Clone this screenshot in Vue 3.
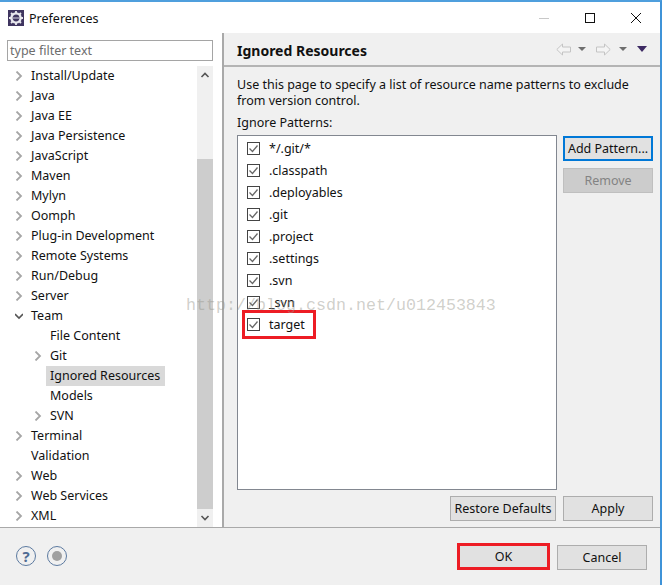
<template>
  <div class="window">
    <div class="titlebar">
      <svg class="app-icon" width="16" height="16" viewBox="0 0 16 16">
        <rect width="16" height="16" fill="#3f3560" />
        <circle cx="8" cy="8" r="4.6" fill="none" stroke="#e8e8ee" stroke-width="2.4" />
        <path d="M8 1v3M8 12v3M1 8h3M12 8h3M3 3l2 2M11 11l2 2M13 3l-2 2M5 11l-2 2" stroke="#e8e8ee" stroke-width="1.8" />
        <rect x="5" y="7" width="6" height="2" fill="#8a84a0" />
      </svg>
      <span class="title">Preferences</span>
      <div class="win-buttons">
        <svg width="10" height="10" viewBox="0 0 10 10"><path d="M0 5.5h10" stroke="#c8c8c8" /></svg>
        <svg width="10" height="10" viewBox="0 0 10 10"><rect x=".5" y=".5" width="9" height="9" fill="none" stroke="#111" /></svg>
        <svg width="10" height="10" viewBox="0 0 10 10"><path d="M0 0l10 10M10 0L0 10" stroke="#111" /></svg>
      </div>
    </div>

    <div class="main">
      <div class="left">
        <div class="filter">type filter text</div>
        <div class="tree-wrap">
          <div class="tree">
            <div
              v-for="item in tree"
              :key="item.label"
              class="tree-row"
              :class="{ child: item.child }"
            >
              <svg v-if="item.arrow" class="twisty" width="8" height="10" viewBox="0 0 8 10">
                <path
                  v-if="item.open"
                  d="M0 3l4 4 4-4"
                  fill="none"
                  stroke="#555"
                  stroke-width="1.6"
                />
                <path v-else d="M1.5 .5l4.5 4.5-4.5 4.5" fill="none" stroke="#a6a6a6" stroke-width="1.8" />
              </svg>
              <span class="tree-label" :class="{ selected: item.selected }">{{ item.label }}</span>
            </div>
          </div>
          <div class="scrollbar">
            <svg width="16" height="18" viewBox="0 0 16 18"><path d="M4.5 11l3.5-3.5 3.5 3.5" fill="none" stroke="#555" stroke-width="1.6" /></svg>
            <div class="track"><div class="thumb"></div></div>
            <svg width="16" height="18" viewBox="0 0 16 18"><path d="M4.5 7l3.5 3.5 3.5-3.5" fill="none" stroke="#555" stroke-width="1.6" /></svg>
          </div>
        </div>
      </div>

      <div class="right">
        <div class="page-header">
          <span class="page-title">Ignored Resources</span>
          <div class="nav">
            <svg width="15" height="13" viewBox="0 0 15 13"><path d="M.8 6.5L6.5 1v3h8v5h-8v3z" fill="#f4f4f4" stroke="#c4c4c4" /></svg>
            <span class="tri first"></span>
            <svg class="fwd" width="15" height="13" viewBox="0 0 15 13"><path d="M14.2 6.5L8.5 1v3h-8v5h8v3z" fill="#f4f4f4" stroke="#c4c4c4" /></svg>
            <span class="tri"></span>
            <span class="tri menu"></span>
          </div>
        </div>
        <div class="page-body">
          <p class="desc">Use this page to specify a list of resource name patterns to exclude<br />from version control.</p>
          <div class="patterns-label">Ignore Patterns:</div>
          <div class="patterns">
            <div class="list">
              <div v-for="p in patterns" :key="p" class="list-row">
                <svg width="13" height="13" viewBox="0 0 13 13">
                  <rect x=".5" y=".5" width="12" height="12" fill="#fff" stroke="#444" />
                  <path d="M2.5 6.5l3 3 5-6" fill="none" stroke="#666" stroke-width="1.3" />
                </svg>
                <span>{{ p }}</span>
              </div>
              <div class="mark"></div>
            </div>
            <div class="side-buttons">
              <button class="btn focused">Add Pattern...</button>
              <button class="btn disabled">Remove</button>
            </div>
          </div>
          <div class="page-actions">
            <button class="btn restore">Restore Defaults</button>
            <button class="btn apply">Apply</button>
          </div>
        </div>
      </div>
    </div>

    <div class="footer">
      <div class="help">
        <span class="round q">?</span>
        <span class="round rec"><i></i></span>
      </div>
      <div class="footer-buttons">
        <button class="btn ok">OK</button>
        <button class="btn cancel">Cancel</button>
      </div>
    </div>

    <div class="watermark">http://blog.csdn.net/u012453843</div>
  </div>
</template>

<script setup>
const names = [
  "Install/Update",
  "Java",
  "Java EE",
  "Java Persistence",
  "JavaScript",
  "Maven",
  "Mylyn",
  "Oomph",
  "Plug-in Development",
  "Remote Systems",
  "Run/Debug",
  "Server",
];

const tree = [
  ...names.map((label) => ({ label, arrow: true })),
  { label: "Team", arrow: true, open: true },
  { label: "File Content", child: true },
  { label: "Git", child: true, arrow: true },
  { label: "Ignored Resources", child: true, selected: true },
  { label: "Models", child: true },
  { label: "SVN", child: true, arrow: true },
  { label: "Terminal", arrow: true },
  { label: "Validation" },
  { label: "Web", arrow: true },
  { label: "Web Services", arrow: true },
  { label: "XML", arrow: true },
];

const patterns = [
  "*/.git/*",
  ".classpath",
  ".deployables",
  ".git",
  ".project",
  ".settings",
  ".svn",
  "_svn",
  "target",
];
</script>

<style>
html,
body {
  background: #fff;
}
</style>

<style scoped>
.window {
  position: relative;
  box-sizing: border-box;
  width: 662px;
  height: 585px;
  display: flex;
  flex-direction: column;
  border-top: 2px solid #4f9fdd;
  border-right: 2px solid #3f93d8;
  font-family: "Noto Sans", sans-serif;
  font-size: 12.5px;
  color: #111;
  background: #f0f0f0;
  overflow: hidden;
}

.titlebar {
  height: 31px;
  flex: none;
  display: flex;
  align-items: center;
  padding-left: 8px;
  background: #fff;
}

.title {
  margin-left: 5px;
  margin-top: 1px;
}

.win-buttons {
  margin-left: auto;
  margin-right: 19px;
  display: flex;
  gap: 36px;
}

.main {
  flex: 1;
  display: flex;
  min-height: 0;
  border-bottom: 1px solid #a9a9a9;
}

.left {
  width: 224px;
  flex: none;
  box-sizing: border-box;
  padding: 7px 9px 0 7px;
  display: flex;
  flex-direction: column;
  background: #fff;
  border-right: 2px solid #a9a9a9;
}

.filter {
  box-sizing: border-box;
  height: 21px;
  width: 206px;
  line-height: 20px;
  padding-left: 2px;
  border: 1px solid #a5a5a5;
  color: #6d6d6d;
}

.tree-wrap {
  flex: 1;
  min-height: 0;
  display: flex;
  margin-top: 5px;
}

.tree {
  flex: 1;
  margin-left: -7px;
}

.tree-row {
  position: relative;
  height: 20px;
  line-height: 20px;
  padding-left: 31px;
}

.tree-row.child {
  padding-left: 50px;
}

.twisty {
  position: absolute;
  left: 15px;
  top: 5px;
}

.child .twisty {
  left: 34px;
}

.tree-label.selected {
  display: block;
  width: 119px;
  height: 20px;
  margin-left: -4px;
  padding-left: 4px;
  box-sizing: border-box;
  background: #d9d9d9;
  white-space: nowrap;
}

.scrollbar {
  width: 16px;
  flex: none;
  display: flex;
  flex-direction: column;
  background: #f0f0f0;
  margin-left: auto;
}

.scrollbar svg {
  flex: none;
}

.track {
  flex: 1;
  display: flex;
  flex-direction: column;
}

.thumb {
  margin-top: 75px;
  flex: 1;
  background: #cdcdcd;
}

.right {
  flex: 1;
  display: flex;
  flex-direction: column;
  min-width: 0;
}

.page-header {
  height: 34px;
  flex: none;
  box-sizing: border-box;
  display: flex;
  align-items: center;
  padding: 0 13px 0 13px;
  border-bottom: 2px solid #b4b4b4;
}

.page-title {
  font-weight: 700;
  font-size: 14px;
  margin-top: 2px;
}

.nav {
  margin-left: auto;
  display: flex;
  align-items: center;
}

.nav .fwd {
  margin-left: 10px;
}

.tri {
  width: 0;
  height: 0;
  margin-left: 8px;
  border-left: 4px solid transparent;
  border-right: 4px solid transparent;
  border-top: 4px solid #6e6e6e;
}

.tri.first {
  margin-left: 7px;
}

.tri.menu {
  margin-left: 10px;
  border-left-width: 5px;
  border-right-width: 5px;
  border-top: 6px solid #3d2a63;
}

.page-body {
  flex: 1;
  min-height: 0;
  display: flex;
  flex-direction: column;
  padding: 10px 7px 6px 13px;
}

.desc {
  margin: 0;
  line-height: 16px;
}

.patterns-label {
  margin-top: 6px;
  line-height: 16px;
}

.patterns {
  flex: 1;
  min-height: 0;
  display: flex;
  gap: 6px;
  margin-top: 4px;
}

.list {
  position: relative;
  flex: 1;
  box-sizing: border-box;
  border: 1px solid #828790;
  background: #fff;
  padding: 1px 0 0 9px;
}

.list-row {
  height: 22px;
  display: flex;
  align-items: center;
  gap: 9px;
}

.mark {
  position: absolute;
  left: 4px;
  top: 174px;
  width: 74px;
  height: 29px;
  box-sizing: border-box;
  border: 3px solid #ed1c24;
}

.side-buttons {
  width: 90px;
  flex: none;
  display: flex;
  flex-direction: column;
  gap: 7px;
  padding-top: 1px;
}

.btn {
  box-sizing: border-box;
  height: 25px;
  padding: 0;
  font: inherit;
  color: #111;
  background: #e1e1e1;
  border: 1px solid #adadad;
}

.btn.focused {
  border: 2px solid #0078d7;
}

.btn.disabled {
  background: #ccc;
  color: #838383;
  border-color: #bfbfbf;
}

.page-actions {
  flex: none;
  display: flex;
  justify-content: flex-end;
  gap: 7px;
  margin-top: 6px;
}

.restore {
  width: 106px;
}

.apply {
  width: 90px;
}

.footer {
  height: 57px;
  flex: none;
  display: flex;
  align-items: flex-start;
  justify-content: space-between;
  padding: 0 13px 0 16px;
}

.help {
  display: flex;
  gap: 11px;
  margin-top: 18px;
}

.round {
  box-sizing: border-box;
  width: 20px;
  height: 20px;
  border: 1.5px solid #5c7aa0;
  border-radius: 50%;
  display: flex;
  align-items: center;
  justify-content: center;
}

.q {
  font-size: 15px;
  font-weight: 700;
  color: #4f6c94;
}

.rec i {
  width: 10px;
  height: 10px;
  border-radius: 50%;
  background: #a0a0a0;
}

.footer-buttons {
  display: flex;
  align-items: flex-start;
  gap: 7px;
  margin-top: 15px;
}

.ok {
  width: 93px;
  height: 27px;
  border: 3px solid #ed1c24;
}

.cancel {
  width: 90px;
  margin-top: 2px;
}

.watermark {
  position: absolute;
  left: 186px;
  top: 294px;
  font-family: "Liberation Mono", monospace;
  font-size: 16.67px;
  line-height: 20px;
  color: rgba(150, 150, 140, 0.45);
  white-space: nowrap;
  pointer-events: none;
}
</style>
